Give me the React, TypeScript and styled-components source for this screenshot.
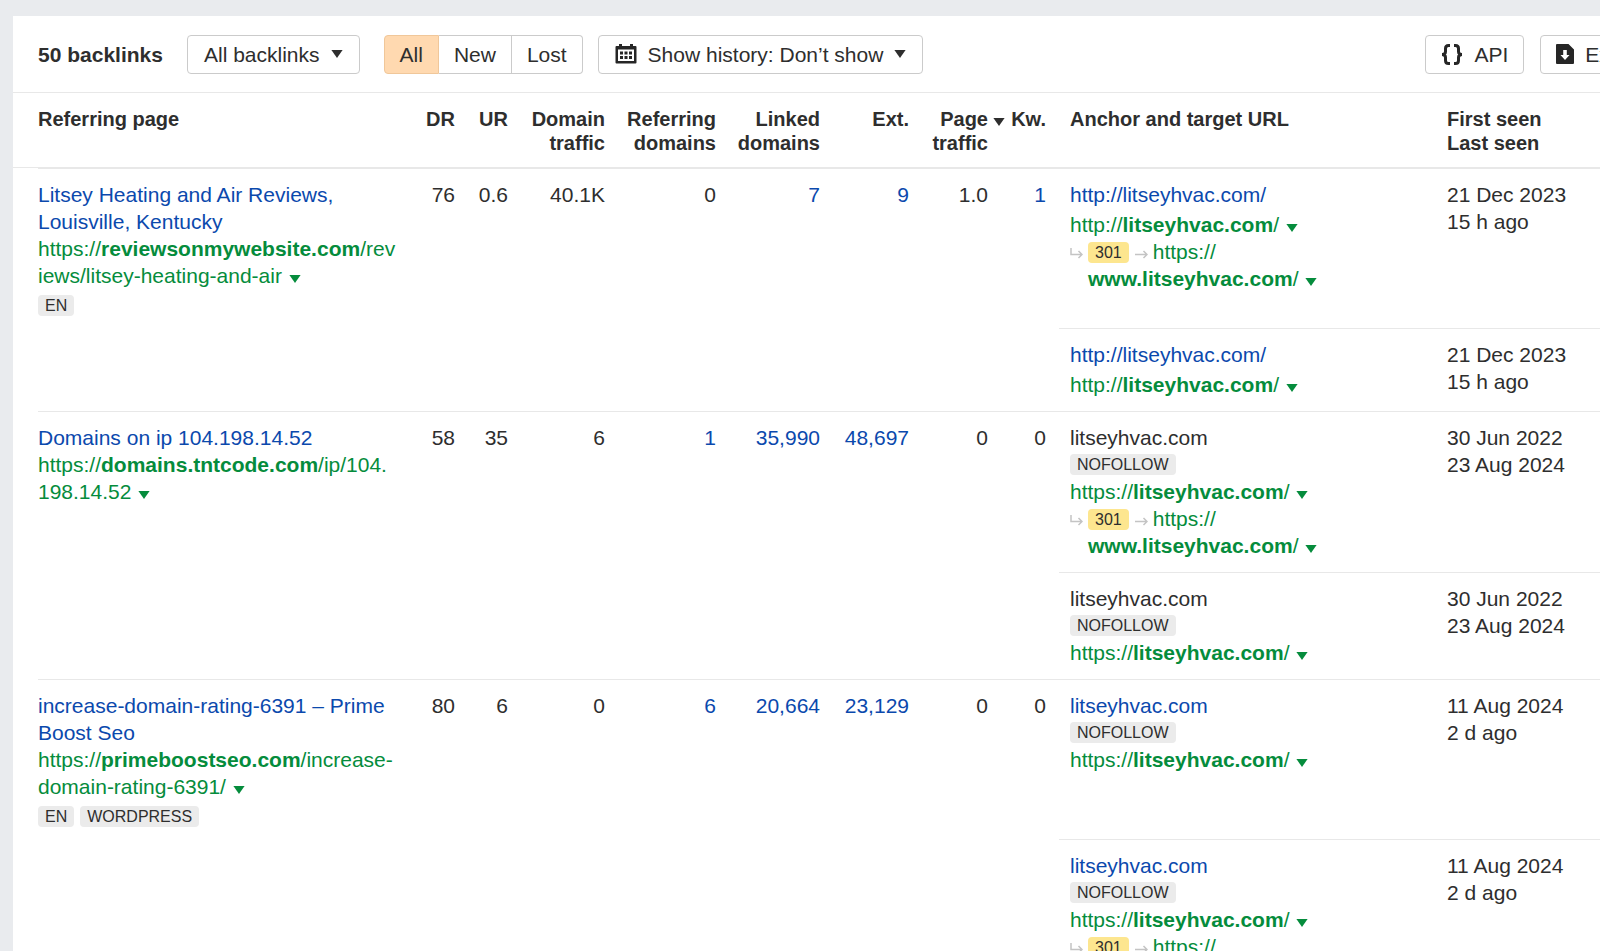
import React from "react";
import styled, { createGlobalStyle, css } from "styled-components";

const color = {
  text: "#2e2e2e",
  blue: "#0b49ad",
  green: "#058c3c",
  line: "#e8e8e8",
  border: "#cbcbcb",
  backdrop: "#e9ebee",
  tag: "#ebebeb",
  yellow: "#fde68f",
  active: "#ffd9b0",
  activeBorder: "#f0c79a",
};

const GlobalStyle = createGlobalStyle`
  *, *::before, *::after { box-sizing: border-box; }
  body {
    margin: 0;
    background: ${color.backdrop};
    color: ${color.text};
    font-family: "Liberation Sans", Arial, Helvetica, sans-serif;
    font-size: 21px;
    line-height: 27px;
  }
`;

const Page = styled.div`
  height: 100vh;
  padding: 16px 0 0 13px;
  overflow: hidden;
`;

const Panel = styled.main`
  min-height: 100%;
  background: #fff;
`;

const Toolbar = styled.header`
  display: flex;
  align-items: center;
  height: 77px;
  padding-left: 25px;
  border-bottom: 1px solid ${color.line};
`;

const Title = styled.h1`
  flex: none;
  width: 149px;
  margin: 0;
  font-size: 21px;
  font-weight: 700;
  white-space: nowrap;
`;

const buttonBase = css`
  display: inline-flex;
  align-items: center;
  flex: none;
  height: 39px;
  background: #fff;
  color: inherit;
  font: inherit;
  white-space: nowrap;
  cursor: pointer;
`;

const Button = styled.button<{ $menu?: boolean }>`
  ${buttonBase}
  gap: 11px;
  padding: 0 ${(p) => (p.$menu ? 16 : 15)}px;
  border: 1px solid ${color.border};
  border-radius: 4px;
`;

const Segments = styled.div`
  display: flex;
  flex: none;
  margin: 0 15px 0 24px;
`;

const Segment = styled.button<{ $active?: boolean }>`
  ${buttonBase}
  padding: 0 15px;
  border: 1px solid ${(p) => (p.$active ? color.activeBorder : color.border)};
  ${(p) => p.$active && css`background: ${color.active};`}
  &:not(:first-child) { border-left-width: 0; }
  &:first-child { border-radius: 4px 0 0 4px; }
  &:last-child { border-radius: 0 4px 4px 0; }
`;

/* The action group keeps its place and runs past the panel's right edge. */
const Actions = styled.div`
  display: flex;
  flex: none;
  gap: 16px;
  margin: 0 -62px 0 auto;
`;

const Table = styled.table`
  width: 100%;
  table-layout: fixed;
  border-collapse: separate;
  border-spacing: 0;
`;

const Col = styled.col<{ $w?: number }>`
  ${(p) => p.$w && css`width: ${p.$w}px;`}
`;

const HeadCell = styled.th<{ $align?: "right"; $kind?: "page" | "kw" | "anchor" }>`
  padding: 14px 0 12px;
  ${(p) => p.$kind === "page" && css`padding-left: 25px;`}
  ${(p) => p.$kind === "kw" && css`padding-right: 13px;`}
  ${(p) => p.$kind === "anchor" && css`padding-left: 11px;`}
  border-bottom: 1px solid ${color.line};
  font-size: 20px;
  font-weight: 700;
  line-height: 24px;
  text-align: ${(p) => p.$align ?? "left"};
  vertical-align: top;
`;

const cellBase = css`
  padding: 12px 0 13px;
  border-top: 1px solid ${color.line};
  text-align: left;
  vertical-align: top;
`;

/* The rule above a referring page starts at the text, not at the panel edge. */
const PageCell = styled.td`
  ${cellBase}
  padding: 13px 4px 13px 25px;
  border-top: 0;
  background: linear-gradient(${color.line}, ${color.line}) no-repeat 25px 0 / 100% 1px;
  overflow-wrap: anywhere;
`;

const NumberCell = styled.td<{ $last?: boolean }>`
  ${cellBase}
  text-align: right;
  ${(p) => p.$last && css`padding-right: 13px;`}
`;

const AnchorCell = styled.td<{ $first?: boolean }>`
  ${cellBase}
  padding-left: 11px;
  ${(p) => p.$first && css`height: 160px;`}
`;

const DateCell = styled.td`
  ${cellBase}
  white-space: nowrap;
`;

const TextLink = styled.a`
  color: ${color.blue};
  text-decoration: none;
`;

const UrlLink = styled.a`
  color: ${color.green};
  text-decoration: none;
`;

const Host = styled.b`
  font-weight: 700;
  white-space: nowrap;
`;

const Line = styled.div<{ $spaced?: boolean }>`
  ${(p) => p.$spaced && css`margin-top: 3px;`}
`;

const Tag = styled.span<{ $tone?: "yellow" }>`
  display: block;
  flex: none;
  height: 21px;
  padding: 0 7px;
  border-radius: 4px;
  background: ${(p) => (p.$tone === "yellow" ? color.yellow : color.tag)};
  font-size: 16px;
  line-height: 21px;
`;

const TagRow = styled.div<{ $below?: boolean }>`
  display: flex;
  gap: 6px;
  height: 27px;
  padding-top: ${(p) => (p.$below ? 6 : 3)}px;
`;

const Redirect = styled.div`
  display: grid;
  grid-template-columns: 18px 1fr;
  max-width: 280px;
`;

const StatusTag = styled(Tag)`
  display: inline-block;
  vertical-align: 1px;
`;

const CaretButton = styled.button`
  display: inline-block;
  margin: 0 0 0 7px;
  padding: 0;
  border: 0;
  background: none;
  color: ${color.green};
  font: inherit;
  line-height: 8px;
  cursor: pointer;
`;

const SortMark = styled.span`
  display: inline-block;
  width: 12px;
  margin: 0 -17px 0 5px;
`;

const Glyph = styled.svg`
  display: block;
  flex: none;
`;

const InlineGlyph = styled.svg`
  display: inline-block;
  vertical-align: baseline;
`;

const ArrowGlyph = styled(InlineGlyph)`
  margin: 0 5px 0 6px;
`;

const HookGlyph = styled(Glyph)`
  margin-top: 10px;
`;

const Caret = () => (
  <InlineGlyph width="12" height="8" viewBox="0 0 12 8" aria-hidden="true">
    <path d="M0.4 0H11.6L6 8Z" fill="currentColor" />
  </InlineGlyph>
);

const ButtonCaret = () => (
  <Glyph width="12" height="8" viewBox="0 0 12 8" aria-hidden="true">
    <path d="M0.4 0H11.6L6 8Z" fill="currentColor" />
  </Glyph>
);

const CalendarIcon = () => (
  <Glyph width="22" height="20" viewBox="0 0 22 20" aria-hidden="true">
    <path
      fillRule="evenodd"
      fill="#262626"
      d="M0.500 3a1 1 0 0 1 1-1H4V0H7V2H15V0H18V2H20.500a1 1 0 0 1 1 1V18.500a1 1 0 0 1-1 1H1.500a1 1 0 0 1-1-1ZM3 5.500V17H19V5.500Z"
    />
    <path
      fill="#262626"
      d="M5 7.500h3v3H5zM9.500 7.500h3v3H9.500zM14 7.500h3v3H14zM5 12h3v3H5zM9.500 12h3v3H9.500zM14 12h3v3H14z"
    />
  </Glyph>
);

const BracesIcon = () => (
  <Glyph width="22" height="21" viewBox="0 0 22 21" aria-hidden="true">
    <path
      fill="none"
      stroke="#262626"
      strokeWidth="3"
      d="M9 1.500H7.500Q4.500 1.500 4.500 4.500V7.500Q4.500 10.500 1 10.500Q4.500 10.500 4.500 13.500V16.500Q4.500 19.500 7.500 19.500H9M13 1.500H14.500Q17.500 1.500 17.500 4.500V7.500Q17.500 10.500 21 10.500Q17.500 10.500 17.500 13.500V16.500Q17.500 19.500 14.500 19.500H13"
    />
  </Glyph>
);

const ExportIcon = () => (
  <Glyph width="18" height="20" viewBox="0 0 18 20" aria-hidden="true">
    <path
      fillRule="evenodd"
      fill="#262626"
      d="M1 0H12.500L18 5.500V19a1 1 0 0 1-1 1H1a1 1 0 0 1-1-1V1a1 1 0 0 1 1-1ZM7.200 6V11H4.500L9 16L13.500 11H10.800V6Z"
    />
  </Glyph>
);

type Url = { scheme: string; host: string; path: string[] };
type Target = {
  anchor: string;
  linked?: boolean;
  nofollow?: boolean;
  scheme: string;
  redirect?: boolean;
  first: string;
  last: string;
};
type Value = { v: string; link?: boolean };
type Backlink = { title: string; url: Url; tags: string[]; values: Value[]; targets: Target[] };

const n = (v: string): Value => ({ v });
const a = (v: string): Value => ({ v, link: true });

const backlinks: Backlink[] = [
  {
    title: "Litsey Heating and Air Reviews, Louisville, Kentucky",
    url: { scheme: "https://", host: "reviewsonmywebsite.com", path: ["/rev", "iews/litsey-heating-and-air"] },
    tags: ["EN"],
    values: [n("76"), n("0.6"), n("40.1K"), n("0"), a("7"), a("9"), n("1.0"), a("1")],
    targets: [
      { anchor: "http://litseyhvac.com/", linked: true, scheme: "http://", redirect: true, first: "21 Dec 2023", last: "15 h ago" },
      { anchor: "http://litseyhvac.com/", linked: true, scheme: "http://", first: "21 Dec 2023", last: "15 h ago" },
    ],
  },
  {
    title: "Domains on ip 104.198.14.52",
    url: { scheme: "https://", host: "domains.tntcode.com", path: ["/ip/104.", "198.14.52"] },
    tags: [],
    values: [n("58"), n("35"), n("6"), a("1"), a("35,990"), a("48,697"), n("0"), n("0")],
    targets: [
      { anchor: "litseyhvac.com", nofollow: true, scheme: "https://", redirect: true, first: "30 Jun 2022", last: "23 Aug 2024" },
      { anchor: "litseyhvac.com", nofollow: true, scheme: "https://", first: "30 Jun 2022", last: "23 Aug 2024" },
    ],
  },
  {
    title: "increase-domain-rating-6391 – Prime Boost Seo",
    url: { scheme: "https://", host: "primeboostseo.com", path: ["/increase-", "domain-rating-6391/"] },
    tags: ["EN", "WORDPRESS"],
    values: [n("80"), n("6"), n("0"), a("6"), a("20,664"), a("23,129"), n("0"), n("0")],
    targets: [
      { anchor: "litseyhvac.com", linked: true, nofollow: true, scheme: "https://", first: "11 Aug 2024", last: "2 d ago" },
      { anchor: "litseyhvac.com", linked: true, nofollow: true, scheme: "https://", redirect: true, first: "11 Aug 2024", last: "2 d ago" },
    ],
  },
];

const columnWidths = [400, 42, 53, 97, 111, 104, 89, 79, 71, 388];

const UrlMenu = () => (
  <CaretButton type="button" aria-label="URL options">
    <Caret />
  </CaretButton>
);

const TargetCells = ({ target, first }: { target: Target; first?: boolean }) => (
  <>
    <AnchorCell $first={first}>
      <Line>{target.linked ? <TextLink href="#anchor">{target.anchor}</TextLink> : target.anchor}</Line>
      {target.nofollow && (
        <TagRow>
          <Tag>NOFOLLOW</Tag>
        </TagRow>
      )}
      <Line $spaced={!target.nofollow}>
        <UrlLink href="#target">
          {target.scheme}
          <Host>litseyhvac.com</Host>/
        </UrlLink>
        <UrlMenu />
      </Line>
      {target.redirect && (
        <Redirect>
          <HookGlyph width="13" height="11" viewBox="0 0 13 11" aria-hidden="true">
            <path d="M1 0V6.500H11.500M8.500 3L12 6.500L8.500 10" fill="none" stroke="#c4c4c4" strokeWidth="1.500" />
          </HookGlyph>
          <div>
            <StatusTag $tone="yellow">301</StatusTag>
            <ArrowGlyph width="13" height="9" viewBox="0 0 13 9" aria-hidden="true">
              <path d="M0 4.500H11.500M8.500 1L12 4.500L8.500 8" fill="none" stroke="#c4c4c4" strokeWidth="1.500" />
            </ArrowGlyph>
            <UrlLink href="#redirect">
              https://
              <wbr />
              <Host>www.litseyhvac.com</Host>/
            </UrlLink>
            <UrlMenu />
          </div>
        </Redirect>
      )}
    </AnchorCell>
    <DateCell>
      {target.first}
      <br />
      {target.last}
    </DateCell>
  </>
);

const BacklinkRows = ({ item }: { item: Backlink }) => (
  <tbody>
    <tr>
      <PageCell rowSpan={item.targets.length}>
        <Line>
          <TextLink href="#page">{item.title}</TextLink>
        </Line>
        <Line>
          <UrlLink href="#url">
            {item.url.scheme}
            <Host>{item.url.host}</Host>
            {item.url.path[0]}
            <wbr />
            {item.url.path[1]}
          </UrlLink>
          <UrlMenu />
        </Line>
        {item.tags.length > 0 && (
          <TagRow $below>
            {item.tags.map((t) => (
              <Tag key={t}>{t}</Tag>
            ))}
          </TagRow>
        )}
      </PageCell>
      {item.values.map((value, i) => (
        <NumberCell key={i} rowSpan={item.targets.length} $last={i === item.values.length - 1}>
          {value.link ? <TextLink href="#value">{value.v}</TextLink> : value.v}
        </NumberCell>
      ))}
      <TargetCells target={item.targets[0]} first />
    </tr>
    {item.targets.slice(1).map((t, i) => (
      <tr key={i}>
        <TargetCells target={t} />
      </tr>
    ))}
  </tbody>
);

export default function App() {
  return (
    <Page>
      <GlobalStyle />
      <Panel>
        <Toolbar>
          <Title>50 backlinks</Title>
          <Button type="button" $menu>
            All backlinks
            <ButtonCaret />
          </Button>
          <Segments role="group" aria-label="Backlink status">
            <Segment type="button" $active aria-pressed="true">All</Segment>
            <Segment type="button" aria-pressed="false">New</Segment>
            <Segment type="button" aria-pressed="false">Lost</Segment>
          </Segments>
          <Button type="button" $menu>
            <CalendarIcon />
            Show history: Don’t show
            <ButtonCaret />
          </Button>
          <Actions>
            <Button type="button">
              <BracesIcon />
              API
            </Button>
            <Button type="button">
              <ExportIcon />
              Export
            </Button>
          </Actions>
        </Toolbar>
        <Table>
          <colgroup>
            {columnWidths.map((w, i) => (
              <Col key={i} $w={w} />
            ))}
            <Col />
          </colgroup>
          <thead>
            <tr>
              <HeadCell scope="col" $kind="page">Referring page</HeadCell>
              <HeadCell scope="col" $align="right">DR</HeadCell>
              <HeadCell scope="col" $align="right">UR</HeadCell>
              <HeadCell scope="col" $align="right">Domain<br />traffic</HeadCell>
              <HeadCell scope="col" $align="right">Referring<br />domains</HeadCell>
              <HeadCell scope="col" $align="right">Linked<br />domains</HeadCell>
              <HeadCell scope="col" $align="right">Ext.</HeadCell>
              <HeadCell scope="col" $align="right" aria-sort="descending">
                Page<SortMark><Caret /></SortMark><br />traffic
              </HeadCell>
              <HeadCell scope="col" $align="right" $kind="kw">Kw.</HeadCell>
              <HeadCell scope="col" $kind="anchor">Anchor and target URL</HeadCell>
              <HeadCell scope="col">First seen<br />Last seen</HeadCell>
            </tr>
          </thead>
          {backlinks.map((b) => (
            <BacklinkRows key={b.title} item={b} />
          ))}
        </Table>
      </Panel>
    </Page>
  );
}
